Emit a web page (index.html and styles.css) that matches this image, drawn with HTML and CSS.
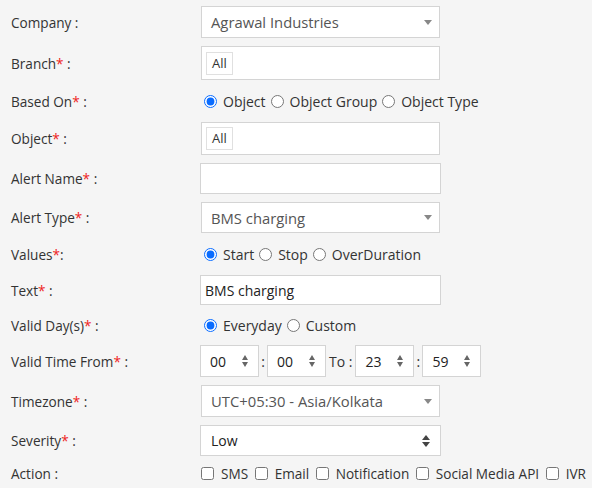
FILE: index.html
```html
<!DOCTYPE html>
<html>
<head>
<meta charset="utf-8">
<link rel="stylesheet" href="styles.css">
</head>
<body>
<form class="form">
  <div class="row h32">
    <label class="lbl">Company :</label>
    <div class="sel sel-gray"><span>Agrawal Industries</span><i class="caret"></i></div>
  </div>
  <div class="row h34">
    <label class="lbl">Branch<b>*</b> :</label>
    <div class="tagbox"><span class="tag">All</span></div>
  </div>
  <div class="row h26">
    <label class="lbl">Based On<b>*</b> :</label>
    <div class="opts">
      <label class="opt"><input type="radio" name="b" checked>Object</label>
      <label class="opt"><input type="radio" name="b">Object Group</label>
      <label class="opt"><input type="radio" name="b">Object Type</label>
    </div>
  </div>
  <div class="row h33">
    <label class="lbl">Object<b>*</b> :</label>
    <div class="tagbox"><span class="tag">All</span></div>
  </div>
  <div class="row h31">
    <label class="lbl">Alert Name<b>*</b> :</label>
    <div class="txt wide"></div>
  </div>
  <div class="row h31">
    <label class="lbl">Alert Type<b>*</b> :</label>
    <div class="sel sel-gray"><span>BMS charging</span><i class="caret"></i></div>
  </div>
  <div class="row h26">
    <label class="lbl">Values<b>*</b>:</label>
    <div class="opts">
      <label class="opt"><input type="radio" name="v" checked>Start</label>
      <label class="opt"><input type="radio" name="v">Stop</label>
      <label class="opt"><input type="radio" name="v">OverDuration</label>
    </div>
  </div>
  <div class="row h30">
    <label class="lbl">Text<b>*</b> :</label>
    <div class="txt wide">BMS charging</div>
  </div>
  <div class="row h24">
    <label class="lbl">Valid Day(s)<b>*</b> :</label>
    <div class="opts">
      <label class="opt"><input type="radio" name="d" checked>Everyday</label>
      <label class="opt"><input type="radio" name="d">Custom</label>
    </div>
  </div>
  <div class="row h32">
    <label class="lbl">Valid Time From<b>*</b> :</label>
    <div class="time">
      <div class="num"><span>00</span><i class="spin"></i></div>
      <span class="sep">:</span>
      <div class="num"><span>00</span><i class="spin"></i></div>
      <span class="to">To :</span>
      <div class="num"><span>23</span><i class="spin"></i></div>
      <span class="sep">:</span>
      <div class="num"><span>59</span><i class="spin"></i></div>
    </div>
  </div>
  <div class="row h32">
    <label class="lbl">Timezone<b>*</b> :</label>
    <div class="sel sel-gray"><span>UTC+05:30 - Asia/Kolkata</span><i class="caret"></i></div>
  </div>
  <div class="row h31">
    <label class="lbl">Severity<b>*</b> :</label>
    <div class="sel sel-dark wide"><span>Low</span><i class="updown"></i></div>
  </div>
  <div class="row h18">
    <label class="lbl">Action :</label>
    <div class="opts checks">
      <label class="opt"><input type="checkbox">SMS</label>
      <label class="opt"><input type="checkbox">Email</label>
      <label class="opt"><input type="checkbox">Notification</label>
      <label class="opt"><input type="checkbox">Social Media API</label>
      <label class="opt"><input type="checkbox">IVR</label>
    </div>
  </div>
</form>
</body>
</html>
```

FILE: styles.css
```css
html, body {
  margin: 0;
  padding: 0;
  background: #f5f5f5;
}
body {
  font-family: "Open Sans", "Liberation Sans", sans-serif;
  color: #333;
  width: 592px;
  height: 488px;
  overflow: hidden;
}
.form {
  display: flex;
  flex-direction: column;
  gap: 8px;
  padding: 6px 0 0 11px;
}
.row {
  display: flex;
  align-items: center;
}
.h18 { height: 18px; }
.h24 { height: 24px; }
.h26 { height: 26px; }
.h30 { height: 30px; }
.h31 { height: 31px; }
.h32 { height: 32px; }
.h33 { height: 33px; }
.h34 { height: 34px; }
.lbl {
  width: 189px;
  flex: none;
  font-size: 13.6px;
  color: #333;
}
.lbl b {
  color: #ee2222;
  font-weight: normal;
}
.sel, .tagbox, .txt {
  box-sizing: border-box;
  height: 100%;
  width: 239px;
  margin-left: 1px;
  background: #fff;
  border: 1px solid #d4d4d4;
  display: flex;
  align-items: center;
}
.wide {
  width: 241px;
  margin-left: 0;
}
.sel {
  justify-content: space-between;
  padding: 0 0 0 9px;
  font-size: 14.8px;
}
.sel-gray { color: #555; }
.sel-dark { color: #222; font-size: 14px; padding-left: 10px; }
.caret {
  width: 0;
  height: 0;
  border-left: 4px solid transparent;
  border-right: 4px solid transparent;
  border-top: 5px solid #888;
  margin-right: 7px;
}
.updown {
  position: relative;
  width: 8px;
  height: 12px;
  margin-right: 10px;
}
.updown::before, .updown::after {
  content: "";
  position: absolute;
  left: 0;
  border-left: 4px solid transparent;
  border-right: 4px solid transparent;
}
.updown::before { top: 0; border-bottom: 5px solid #444; }
.updown::after { bottom: 0; border-top: 5px solid #444; }
.tagbox {
  padding: 0 4px;
}
.tag {
  box-sizing: border-box;
  height: 23px;
  line-height: 21px;
  padding: 0 5px;
  border: 1px solid #e0e0e0;
  font-size: 13px;
  color: #333;
  background: #fff;
}
.txt {
  padding: 0 4px;
  font-size: 14px;
  color: #222;
}
.opts {
  display: flex;
  align-items: center;
  font-size: 14px;
  color: #333;
}
.opt {
  display: flex;
  align-items: center;
}
.opts input[type=radio] {
  accent-color: #0a6cff;
  width: 13px;
  height: 13px;
  margin: 0 6px 0 5px;
}
.opts .opt:first-child input[type=radio] { margin-left: 4px; }
.checks {
  font-size: 13.6px;
}
.checks .opt input {
  margin: 0 7px 0 6.5px;
  width: 13px;
  height: 13px;
}
.checks .opt:first-child input { margin-left: 1px; }
.time {
  display: flex;
  align-items: center;
  height: 100%;
  font-size: 14px;
}
.num {
  box-sizing: border-box;
  height: 100%;
  width: 59px;
  background: #fff;
  border: 1px solid #d4d4d4;
  display: flex;
  align-items: center;
  justify-content: space-between;
  padding: 0 9px 0 9px;
  color: #222;
}
.spin {
  position: relative;
  width: 7px;
  height: 12px;
}
.spin::before, .spin::after {
  content: "";
  position: absolute;
  left: 0;
  border-left: 3.5px solid transparent;
  border-right: 3.5px solid transparent;
}
.spin::before { top: 0; border-bottom: 5px solid #666; }
.spin::after { bottom: 0; border-top: 5px solid #666; }
.sep {
  width: 8px;
  text-align: center;
  color: #333;
}
.to {
  padding: 0 3px 0 3px;
  color: #333;
}
```
